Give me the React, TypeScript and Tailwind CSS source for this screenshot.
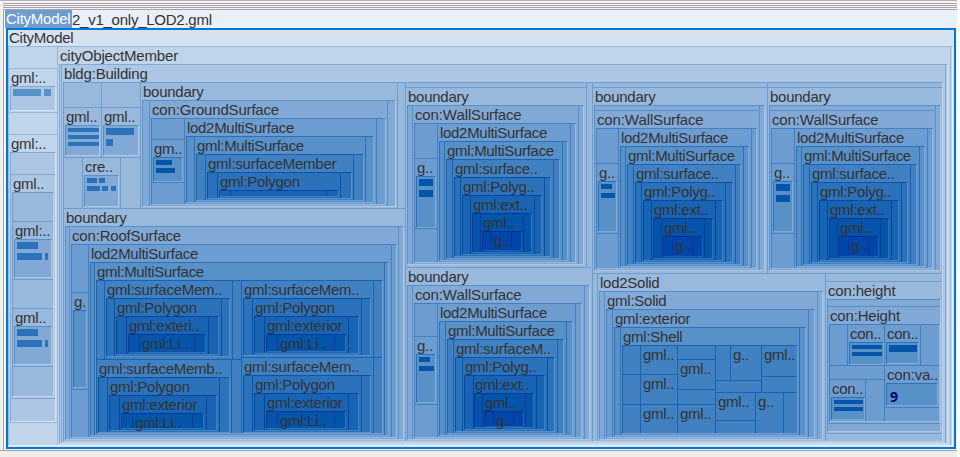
import React from "react";

/* Fill per nesting depth, from the window surface down to the innermost element. */
const FILL = [
  "bg-[#e9f0f8]", "bg-[#d5e2ef]", "bg-[#c0d4ea]", "bg-[#acc6e4]", "bg-[#98b8dc]", "bg-[#82a9d6]", "bg-[#6d9cd0]",
  "bg-[#5890c8]", "bg-[#4181c1]", "bg-[#2c72ba]", "bg-[#1864b2]", "bg-[#0455aa]", "bg-[#0046a8]", "bg-[#00389e]", "bg-[#002e92]",
];
const EDGE_DARK = [
  "border-t-[#c0d4ea] border-l-[#c0d4ea]", "border-t-[#acc6e4] border-l-[#acc6e4]", "border-t-[#98b8dc] border-l-[#98b8dc]",
  "border-t-[#82a9d6] border-l-[#82a9d6]", "border-t-[#6d9cd0] border-l-[#6d9cd0]", "border-t-[#5890c8] border-l-[#5890c8]",
  "border-t-[#4181c1] border-l-[#4181c1]", "border-t-[#2c72ba] border-l-[#2c72ba]", "border-t-[#1864b2] border-l-[#1864b2]",
  "border-t-[#0455aa] border-l-[#0455aa]", "border-t-[#0046a8] border-l-[#0046a8]", "border-t-[#00389e] border-l-[#00389e]",
  "border-t-[#002e92] border-l-[#002e92]",
];
const EDGE_LIGHT = [
  "border-r-white border-b-white", "border-r-white border-b-white", "border-r-[#e9f0f8] border-b-[#e9f0f8]",
  "border-r-[#d5e2ef] border-b-[#d5e2ef]", "border-r-[#c0d4ea] border-b-[#c0d4ea]", "border-r-[#acc6e4] border-b-[#acc6e4]",
  "border-r-[#98b8dc] border-b-[#98b8dc]", "border-r-[#82a9d6] border-b-[#82a9d6]", "border-r-[#6d9cd0] border-b-[#6d9cd0]",
  "border-r-[#5890c8] border-b-[#5890c8]", "border-r-[#4181c1] border-b-[#4181c1]", "border-r-[#2c72ba] border-b-[#2c72ba]",
  "border-r-[#1864b2] border-b-[#1864b2]",
];

type Rect = [number, number, number, number];
/* One line of text blocks: top, bottom, then start/end pairs. */
type Line = [number, number, ...number[]];
type Node =
  | null
  | { kind: "cols" | "rows"; at: number[]; kids: Node[] }
  | { kind: "pane"; title: string; frame: Rect; body: Node }
  | { kind: "lines"; lines: Line[] }
  | { kind: "label"; title: string }
  | { kind: "value"; text: string };

const cols = (at: number[], ...kids: Node[]): Node => ({ kind: "cols", at, kids });
const rows = (at: number[], ...kids: Node[]): Node => ({ kind: "rows", at, kids });
const pane = (title: string, frame: Rect, body: Node = null): Node => ({ kind: "pane", title, frame, body });
const lines = (...l: Line[]): Node => ({ kind: "lines", lines: l });
const label = (title: string): Node => ({ kind: "label", title });

type Step = [string, number, number, number, number, number, number];
/* Chain of panes, each centred between two thin side strips of its parent. */
const nest = (steps: Step[], inner: Node): Node => {
  const [[title, x0, y0, x1, y1, left, right], ...rest] = steps;
  return pane(title, [x0, y0, x1, y1], cols([left, right], null, rest.length ? nest(rest, inner) : inner, null));
};

const tracking = (text: string) =>
  /^(con:|bldg:|city)/.test(text) ? "tracking-[-0.18px]" : /Multi/.test(text) ? "tracking-[-0.3px]" : "tracking-[-0.25px]";

const Title = ({ text, indent, height }: { text: string; indent: number; height: number }) => (
  <div className="flex shrink-0 items-end whitespace-nowrap" style={{ height, paddingLeft: indent }}>
    <span className={`relative z-10 leading-[17px] ${tracking(text)}`}>{text}</span>
  </div>
);

const Area = ({ node, box, level }: { node: Node; box: Rect; level: number }): React.ReactElement | null => {
  if (!node) return null;
  const [X0, Y0, X1, Y1] = box;
  if (node.kind === "cols" || node.kind === "rows") {
    const horizontal = node.kind === "cols";
    return (
      <div className={horizontal ? "flex h-full w-full" : "flex h-full w-full flex-col"}>
        {node.kids.map((kid, i) => {
          const from = i === 0 ? (horizontal ? X0 : Y0) : node.at[i - 1] + 1;
          const to = i === node.at.length ? (horizontal ? X1 : Y1) : node.at[i];
          const part: Rect = horizontal ? [from, Y0, to, Y1] : [X0, from, X1, to];
          return (
            <React.Fragment key={i}>
              {i > 0 && <div className={`${horizontal ? "w-px" : "h-px"} shrink-0 ${FILL[Math.min(level + 2, 14)]}`} />}
              <div className="shrink-0" style={horizontal ? { width: to - from } : { height: to - from }}>
                <Area node={kid} box={part} level={level} />
              </div>
            </React.Fragment>
          );
        })}
      </div>
    );
  }
  if (node.kind === "label") return <Title text={node.title} indent={2} height={17} />;
  if (node.kind === "value")
    return <div className="flex h-full items-center pl-[3px] pt-[4px] font-['Noto_Sans',sans-serif] text-[14px] leading-none font-bold text-[#000070]">{node.text}</div>;
  if (node.kind === "lines")
    return (
      <div className="flex flex-col">
        {node.lines.map(([top, bottom, ...xs], i) => (
          <div key={i} className="flex" style={{ height: bottom - top, marginTop: top - (i ? node.lines[i - 1][1] : Y0) }}>
            {xs.map((x, j) =>
              j % 2 ? null : (
                <div
                  key={j}
                  className={`h-full shrink-0 ${FILL[level + 4]}`}
                  style={{ width: xs[j + 1] - x, marginLeft: x - (j ? xs[j - 1] : X0) }}
                />
              ),
            )}
          </div>
        ))}
      </div>
    );
  const [x0, y0, x1, y1] = node.frame;
  const deeper = level + 1;
  return (
    <div className="flex h-full w-full flex-col">
      <Title text={node.title} indent={x0 - X0 + 1} height={y0 - Y0} />
      <div
        className={`shrink-0 border ${FILL[deeper]} ${EDGE_DARK[deeper]} ${EDGE_LIGHT[deeper]}`}
        style={{ width: x1 - x0, height: y1 - y0, marginLeft: x0 - X0 }}
      >
        <Area node={node.body} box={[x0 + 1, y0 + 1, x1 - 1, y1 - 1]} level={deeper} />
      </div>
    </div>
  );
};

const attributes = rows(
  [68, 112, 134, 422],
  null,
  pane("gml:..", [10, 86, 56, 111], lines([89, 96, 13, 41, 44, 51])),
  null,
  pane("gml:..", [10, 152, 56, 422], rows(
    [174, 398],
    null,
    pane("gml..", [12, 192, 54, 397], rows(
      [221, 279, 308, 366],
      null,
      pane("gml:..", [14, 239, 52, 278], lines([242, 249, 17, 38], [253, 260, 17, 42, 45, 48])),
      null,
      pane("gml..", [14, 326, 52, 365], lines([329, 336, 17, 38], [340, 347, 17, 42, 45, 48])),
      null,
    )),
    null,
  )),
  null,
);

const buildingInfo = rows(
  [157],
  cols(
    [101],
    rows([107], null, pane("gml..", [65, 125, 100, 156], lines([128, 132, 68, 99], [135, 139, 68, 99], [142, 146, 68, 99]))),
    rows([107], null, pane("gml..", [103, 125, 139, 156], lines([128, 135, 106, 134], [139, 146, 106, 113]))),
  ),
  cols(
    [82, 120],
    null,
    pane("cre..", [84, 175, 119, 207], lines([178, 183, 87, 97, 99, 105], [186, 191, 87, 100, 102, 108, 111, 116])),
    null,
  ),
);

const ground = pane("boundary", [142, 100, 396, 207], cols(
  [149, 387],
  null,
  pane("con:GroundSurface", [151, 118, 386, 205], cols(
    [184, 376],
    rows([139, 182], null, pane("gm..", [153, 157, 183, 182], lines([160, 165, 156, 172], [168, 173, 156, 175])), null),
    nest([
      ["lod2MultiSurface", 186, 136, 374, 203, 194, 365],
      ["gml:MultiSurface", 196, 154, 364, 201, 205, 353],
      ["gml:surfaceMember", 207, 172, 352, 199, 217, 340],
      ["gml:Polygon", 219, 190, 339, 197, 230, 326],
    ], null),
    null,
  )),
  null,
));

const roof = nest([["boundary", 65, 226, 404, 440, 69, 398]], pane("con:RoofSurface", [71, 244, 397, 438], cols(
  [88, 391],
  rows([292, 389], null, pane("g.", [73, 310, 87, 388]), null),
  nest([["lod2MultiSurface", 90, 262, 389, 436, 94, 384]], pane("gml:MultiSurface", [96, 280, 383, 434], cols(
    [241],
    rows(
      [359],
      cols([104, 232], null, nest([
        ["gml:surfaceMem..", 106, 298, 230, 357, 114, 221],
        ["gml:Polygon", 116, 316, 219, 355, 126, 208],
        ["gml:exteri..", 128, 334, 206, 353, 139, 194],
      ], label("gml:Li..")), null),
      cols([231], nest([
        ["gml:surfaceMemb..", 98, 377, 230, 433, 107, 219],
        ["gml:Polygon", 109, 395, 217, 431, 119, 206],
        ["gml:exterior", 121, 413, 204, 429, 132, 192],
      ], label("gml:Li..")), null),
    ),
    rows(
      [357],
      cols([373], nest([
        ["gml:surfaceMem..", 243, 298, 371, 356, 252, 361],
        ["gml:Polygon", 254, 316, 359, 354, 264, 348],
        ["gml:exterior", 266, 334, 346, 352, 277, 334],
      ], label("gml:Li..")), null),
      cols([373], nest([
        ["gml:surfaceMem..", 243, 375, 371, 433, 252, 361],
        ["gml:Polygon", 254, 393, 359, 431, 264, 348],
        ["gml:exterior", 266, 411, 346, 429, 277, 334],
      ], label("gml:Li..")), null),
    ),
  ))),
  null,
)));

const wallWest = nest([["boundary", 407, 105, 584, 265, 412, 578]], pane("con:WallSurface", [414, 123, 576, 263], cols(
  [437, 570],
  rows([158, 228], null, pane("g..", [416, 176, 436, 228], lines([179, 186, 419, 433], [190, 197, 419, 433])), null),
  nest([
    ["lod2MultiSurface", 439, 141, 568, 261, 444, 562],
    ["gml:MultiSurface", 446, 159, 560, 259, 452, 553],
    ["gml:surface..", 454, 177, 551, 257, 460, 544],
    ["gml:Polyg..", 462, 195, 542, 255, 470, 534],
    ["gml:ext..", 472, 213, 532, 253, 480, 523],
    ["gml..", 482, 231, 522, 251, 491, 511],
  ], label("g..")),
  null,
)));

const wallSouth = nest([["boundary", 407, 285, 590, 440, 412, 584]], pane("con:WallSurface", [414, 303, 582, 438], cols(
  [437, 575],
  rows([336, 404], null, pane("g..", [416, 354, 436, 403], lines([357, 362, 419, 430], [366, 371, 419, 434])), null),
  nest([
    ["lod2MultiSurface", 439, 321, 573, 436, 445, 566],
    ["gml:MultiSurface", 447, 339, 564, 434, 453, 557],
    ["gml:surfaceM..", 455, 357, 555, 432, 462, 547],
    ["gml:Polyg..", 464, 375, 545, 430, 473, 536],
    ["gml:ext..", 474, 393, 534, 428, 482, 525],
    ["gml..", 484, 411, 524, 427, 493, 513],
  ], label("g..")),
  null,
)));

const wallNorth = pane("boundary", [594, 105, 765, 271], cols([759], rows([110], null, pane("con:WallSurface", [596, 128, 757, 269], cols(
  [618, 751],
  rows([163, 233], null, pane("g..", [598, 181, 617, 232], lines([184, 189, 601, 612], [193, 198, 601, 615])), null),
  nest([
    ["lod2MultiSurface", 620, 146, 749, 267, 625, 743],
    ["gml:MultiSurface", 627, 164, 741, 265, 633, 735],
    ["gml:surface..", 635, 182, 733, 263, 641, 725],
    ["gml:Polyg..", 643, 200, 723, 261, 651, 715],
    ["gml:ext..", 653, 218, 713, 259, 661, 704],
    ["gml..", 663, 236, 703, 257, 672, 692],
  ], label("g..")),
  null,
))), null));

const wallEast = pane("boundary", [769, 105, 941, 271], cols([935], rows([110], null, pane("con:WallSurface", [771, 128, 933, 269], cols(
  [794, 927],
  rows([163, 233], null, pane("g..", [773, 181, 793, 232], lines([184, 191, 776, 790], [195, 202, 776, 790])), null),
  nest([
    ["lod2MultiSurface", 796, 146, 925, 267, 801, 919],
    ["gml:MultiSurface", 803, 164, 917, 265, 809, 910],
    ["gml:surface..", 811, 182, 908, 263, 817, 901],
    ["gml:Polyg..", 819, 200, 899, 261, 827, 891],
    ["gml:ext..", 829, 218, 889, 259, 837, 880],
    ["gml..", 839, 236, 879, 257, 848, 868],
  ], label("g..")),
  null,
))), null));

const shell = cols(
  [677, 715],
  rows([374, 404], cols([640], null, label("gml..")), cols([640], null, label("gml..")), cols([640], null, label("gml.."))),
  rows([359, 389, 404], null, label("gml.."), null, label("gml..")),
  rows(
    [392],
    cols([761], rows([380], cols([730], null, label("g..")), null), rows([376], label("gml.."), null)),
    cols([755, 783], rows([420], label("gml.."), null), label("g.."), null),
  ),
);

const solid = nest([
  ["lod2Solid", 599, 291, 823, 440, 604, 817],
  ["gml:Solid", 606, 309, 815, 438, 612, 808],
  ["gml:exterior", 614, 327, 806, 436, 620, 799],
], pane("gml:Shell", [622, 345, 798, 434], shell));

const height = rows([281, 433], null, pane("con:height", [827, 299, 941, 432], rows(
  [306, 423],
  null,
  pane("con:Height", [829, 324, 940, 422], cols(
    [884],
    rows(
      [365, 379],
      cols([847], null, pane("con..", [849, 342, 884, 365], lines([345, 349, 852, 882], [352, 356, 852, 882]))),
      null,
      cols([865], pane("con..", [831, 397, 865, 420], lines([400, 404, 834, 863], [407, 411, 834, 863])), null),
    ),
    rows(
      [365, 407],
      cols([920], pane("con..", [886, 342, 919, 364], lines([345, 352, 889, 917])), null),
      pane("con:va..", [886, 383, 938, 406], { kind: "value", text: "9" }),
      null,
    ),
  )),
  null,
)), null);

const building = cols(
  [405],
  rows([208], cols([140, 397], buildingInfo, ground, null), roof),
  cols(
    [592],
    rows([267], cols([586], rows([87], null, wallWest), null), wallSouth),
    rows([273], cols([767], rows([87], null, wallNorth), rows([87], null, wallEast)), cols([597, 825], null, solid, height)),
  ),
);

const model = pane("CityModel", [8, 46, 953, 446], cols(
  [57, 950],
  attributes,
  nest([["cityObjectMember", 59, 64, 948, 444, 61, 945]], pane("bldg:Building", [63, 82, 943, 442], building)),
  null,
));

const Grip = () => (
  <div className="flex h-[10px] shrink-0 flex-col bg-[#f4f2f4]">
    <div className="h-px bg-[#b4b0b4]" />
    <div className="ml-[3px] mt-[2px] h-px bg-[#a8a2a8]" />
    <div className="ml-[3px] mt-px h-px bg-[#a8a2a8]" />
    <div className="ml-[3px] mt-px h-px bg-[#a8a2a8]" />
    <div className="ml-[3px] mt-px h-px bg-[#a8a2a8]" />
  </div>
);

export default function App() {
  return (
    <div className="h-[457px] w-[960px] overflow-hidden bg-white font-['Liberation_Sans',Arial,sans-serif] text-[15px] tracking-[-0.25px] text-[#333333] [font-kerning:none]">
      <div className="flex h-full w-[957px] flex-col overflow-hidden bg-[#ededed]">
        <Grip />
        <div className="flex h-[440px] shrink-0 bg-[#f0f0f0]">
          <div className="ml-[3px] w-px bg-[#a0a0a0]" />
          <div className="w-px bg-white" />
          <div className="flex w-[952px] flex-col bg-[#e9f0f8]">
            <div className="flex h-[18px] shrink-0">
              <span className="h-[18px] w-[67px] whitespace-nowrap bg-[#6d9cd0] pl-px leading-[18px] text-white">CityModel</span>
              <span className="whitespace-nowrap leading-[19px]">2_v1_only_LOD2.gml</span>
            </div>
            <div className="ml-px h-[421px] w-[950px] shrink-0 border-2 border-[#0078d0] bg-[#d5e2ef]">
              <Area node={model} box={[8, 30, 954, 447]} level={1} />
            </div>
          </div>
        </div>
        <div className="h-px shrink-0 bg-[#a0a0a0]" />
      </div>
    </div>
  );
}
